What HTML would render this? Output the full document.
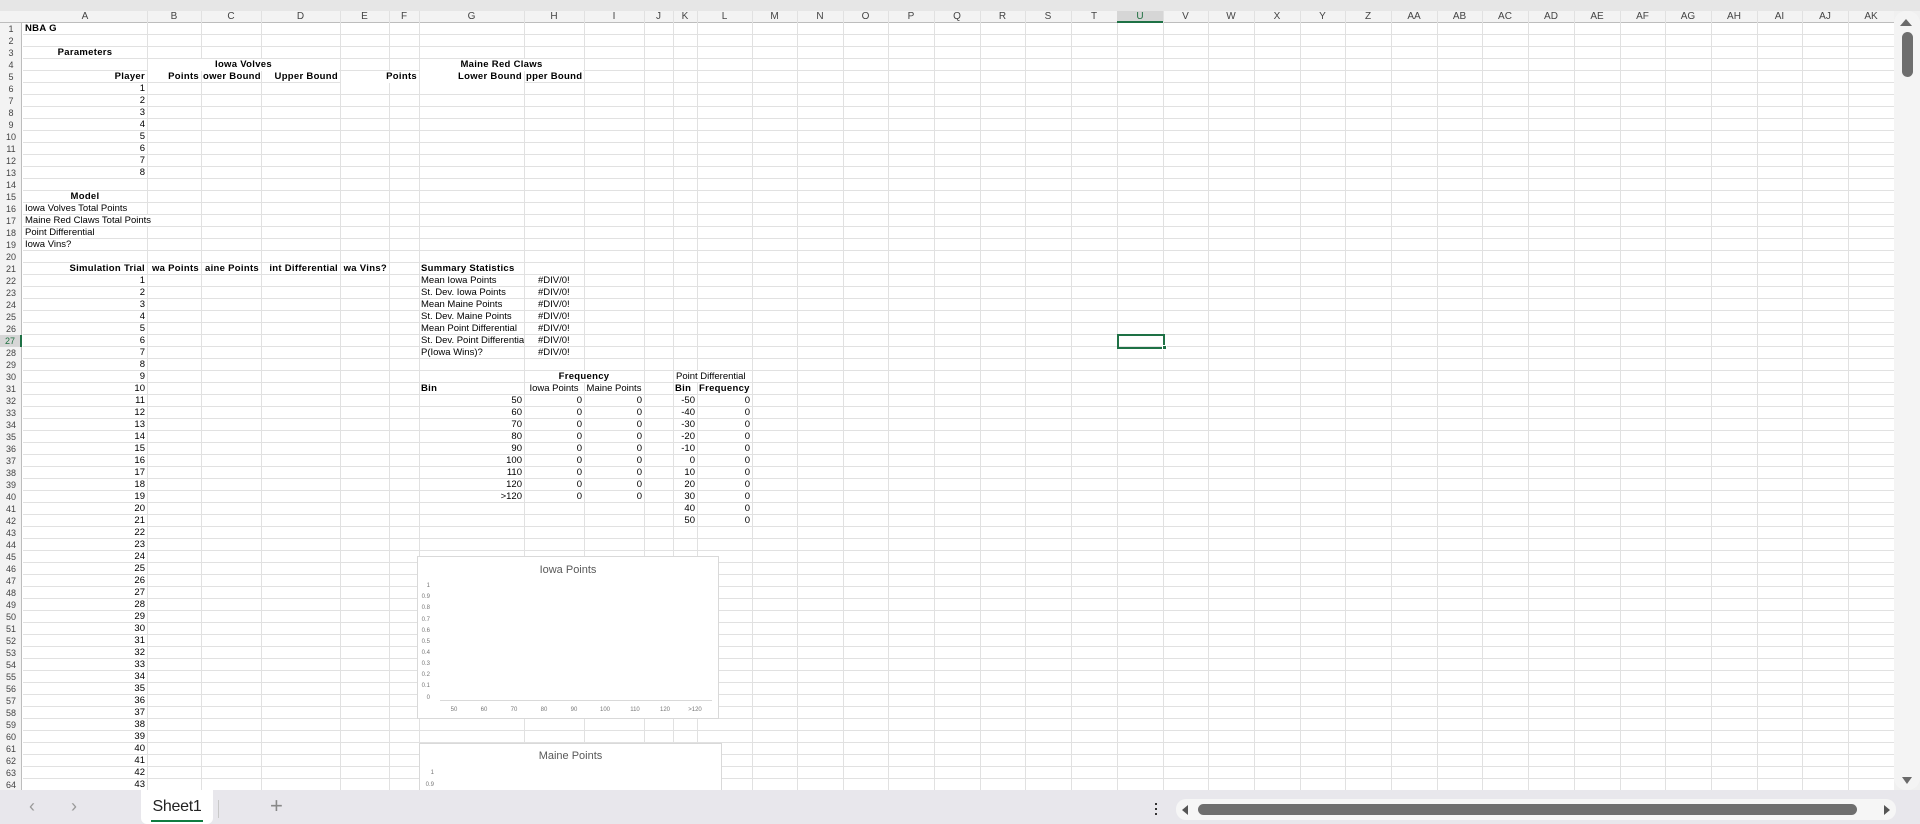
<!DOCTYPE html>
<html><head><meta charset="utf-8"><style>
*{margin:0;padding:0;box-sizing:border-box}
body{width:1920px;height:824px;overflow:hidden;background:#fff;font-family:"Liberation Sans",sans-serif;position:relative}
#top{position:absolute;left:0;top:0;width:1920px;height:11px;background:#e6e6e6}
#colh{position:absolute;left:0;top:11px;width:1894px;height:12px;background:#f3f3f3;border-bottom:1px solid #bdbdbd}
#grid{position:absolute;left:23px;top:23px;width:1871px;height:767px;background:repeating-linear-gradient(to bottom,transparent 0,transparent 11px,#e1e1e1 11px,#e1e1e1 12px)}
#rowh{position:absolute;left:0;top:23px;width:22px;height:767px;background:#f3f3f3;border-right:1px solid #bdbdbd}
.vl{position:absolute;top:11px;height:779px;width:1px;background:#e1e1e1}
.ch{position:absolute;top:11px;height:12px;line-height:12px;font-size:10px;color:#444;text-align:center}
.rh{position:absolute;left:0;width:22px;height:12px;line-height:12px;font-size:9px;color:#444;text-align:center}
.c{position:absolute;height:12px;line-height:12px;font-size:9.5px;white-space:nowrap;overflow:hidden;padding:0 2px;color:#000}
.b{font-weight:bold;letter-spacing:0.3px}.r{text-align:right}.m{text-align:center}
.chart{position:absolute;background:#fff;border:1px solid #d9d9d9}
.ct{position:absolute;width:100%;text-align:center;font-size:11px;color:#595959}
.yl{position:absolute;font-size:6px;color:#777;text-align:right;width:20px}
.xl{position:absolute;font-size:6px;color:#777;text-align:center;width:20px}
#tabs{position:absolute;left:0;top:790px;width:1920px;height:34px;background:#e8e7ec}
#vs{position:absolute;left:1894px;top:11px;width:26px;height:779px;background:#f0f0f0}
</style></head><body>
<div id="top"></div>
<div id="colh"></div>
<div id="grid"></div>
<div id="rowh"></div>
<div class="vl" style="left:147px"></div><div class="vl" style="left:201px"></div><div class="vl" style="left:261px"></div><div class="vl" style="left:340px"></div><div class="vl" style="left:389px"></div><div class="vl" style="left:419px"></div><div class="vl" style="left:524px"></div><div class="vl" style="left:584px"></div><div class="vl" style="left:644px"></div><div class="vl" style="left:673px"></div><div class="vl" style="left:697px"></div><div class="vl" style="left:752px"></div><div class="vl" style="left:797px"></div>
<div class="vl" style="left:843px"></div><div class="vl" style="left:888px"></div><div class="vl" style="left:934px"></div><div class="vl" style="left:980px"></div><div class="vl" style="left:1025px"></div><div class="vl" style="left:1071px"></div><div class="vl" style="left:1117px"></div><div class="vl" style="left:1163px"></div><div class="vl" style="left:1208px"></div><div class="vl" style="left:1254px"></div><div class="vl" style="left:1300px"></div><div class="vl" style="left:1345px"></div><div class="vl" style="left:1391px"></div><div class="vl" style="left:1437px"></div><div class="vl" style="left:1482px"></div><div class="vl" style="left:1528px"></div><div class="vl" style="left:1574px"></div><div class="vl" style="left:1620px"></div><div class="vl" style="left:1665px"></div><div class="vl" style="left:1711px"></div><div class="vl" style="left:1757px"></div><div class="vl" style="left:1802px"></div><div class="vl" style="left:1848px"></div><div class="vl" style="left:1894px"></div>
<div class="ch" style="left:23px;width:124px">A</div><div class="ch" style="left:147px;width:54px">B</div><div class="ch" style="left:201px;width:60px">C</div><div class="ch" style="left:261px;width:79px">D</div><div class="ch" style="left:340px;width:49px">E</div><div class="ch" style="left:389px;width:30px">F</div><div class="ch" style="left:419px;width:105px">G</div><div class="ch" style="left:524px;width:60px">H</div><div class="ch" style="left:584px;width:60px">I</div><div class="ch" style="left:644px;width:29px">J</div><div class="ch" style="left:673px;width:24px">K</div><div class="ch" style="left:697px;width:55px">L</div><div class="ch" style="left:752px;width:45px">M</div>
<div class="ch" style="left:797px;width:46px">N</div><div class="ch" style="left:843px;width:45px">O</div><div class="ch" style="left:888px;width:46px">P</div><div class="ch" style="left:934px;width:46px">Q</div><div class="ch" style="left:980px;width:45px">R</div><div class="ch" style="left:1025px;width:46px">S</div><div class="ch" style="left:1071px;width:46px">T</div><div class="ch" style="left:1117px;width:46px;background:#d6d6d6;color:#1e6e3f;border-bottom:2px solid #1e7145">U</div><div class="ch" style="left:1163px;width:45px">V</div><div class="ch" style="left:1208px;width:46px">W</div><div class="ch" style="left:1254px;width:46px">X</div><div class="ch" style="left:1300px;width:45px">Y</div><div class="ch" style="left:1345px;width:46px">Z</div><div class="ch" style="left:1391px;width:46px">AA</div><div class="ch" style="left:1437px;width:45px">AB</div><div class="ch" style="left:1482px;width:46px">AC</div><div class="ch" style="left:1528px;width:46px">AD</div><div class="ch" style="left:1574px;width:46px">AE</div><div class="ch" style="left:1620px;width:45px">AF</div><div class="ch" style="left:1665px;width:46px">AG</div><div class="ch" style="left:1711px;width:46px">AH</div><div class="ch" style="left:1757px;width:45px">AI</div><div class="ch" style="left:1802px;width:46px">AJ</div><div class="ch" style="left:1848px;width:46px">AK</div>
<div class="rh" style="top:23px">1</div><div class="rh" style="top:35px">2</div><div class="rh" style="top:47px">3</div><div class="rh" style="top:59px">4</div><div class="rh" style="top:71px">5</div><div class="rh" style="top:83px">6</div><div class="rh" style="top:95px">7</div><div class="rh" style="top:107px">8</div><div class="rh" style="top:119px">9</div><div class="rh" style="top:131px">10</div><div class="rh" style="top:143px">11</div><div class="rh" style="top:155px">12</div><div class="rh" style="top:167px">13</div><div class="rh" style="top:179px">14</div><div class="rh" style="top:191px">15</div><div class="rh" style="top:203px">16</div><div class="rh" style="top:215px">17</div><div class="rh" style="top:227px">18</div><div class="rh" style="top:239px">19</div><div class="rh" style="top:251px">20</div><div class="rh" style="top:263px">21</div><div class="rh" style="top:275px">22</div><div class="rh" style="top:287px">23</div><div class="rh" style="top:299px">24</div><div class="rh" style="top:311px">25</div><div class="rh" style="top:323px">26</div><div class="rh" style="top:335px;background:#d6d6d6;color:#1e6e3f;border-right:2px solid #1e7145">27</div><div class="rh" style="top:347px">28</div><div class="rh" style="top:359px">29</div><div class="rh" style="top:371px">30</div><div class="rh" style="top:383px">31</div><div class="rh" style="top:395px">32</div><div class="rh" style="top:407px">33</div><div class="rh" style="top:419px">34</div><div class="rh" style="top:431px">35</div><div class="rh" style="top:443px">36</div><div class="rh" style="top:455px">37</div><div class="rh" style="top:467px">38</div><div class="rh" style="top:479px">39</div><div class="rh" style="top:491px">40</div><div class="rh" style="top:503px">41</div><div class="rh" style="top:515px">42</div><div class="rh" style="top:527px">43</div><div class="rh" style="top:539px">44</div><div class="rh" style="top:551px">45</div><div class="rh" style="top:563px">46</div><div class="rh" style="top:575px">47</div><div class="rh" style="top:587px">48</div><div class="rh" style="top:599px">49</div><div class="rh" style="top:611px">50</div><div class="rh" style="top:623px">51</div><div class="rh" style="top:635px">52</div><div class="rh" style="top:647px">53</div><div class="rh" style="top:659px">54</div><div class="rh" style="top:671px">55</div><div class="rh" style="top:683px">56</div><div class="rh" style="top:695px">57</div><div class="rh" style="top:707px">58</div><div class="rh" style="top:719px">59</div><div class="rh" style="top:731px">60</div><div class="rh" style="top:743px">61</div><div class="rh" style="top:755px">62</div><div class="rh" style="top:767px">63</div><div class="rh" style="top:779px">64</div>

<div class="c b" style="left:23px;top:23px;width:124px">NBA G</div>
<div class="c b m" style="left:23px;top:47px;width:124px">Parameters</div>
<div class="c b m" style="left:148px;top:59px;width:191px;background:#fff">Iowa Volves</div>
<div class="c b m" style="left:420px;top:59px;width:163px;background:#fff">Maine Red Claws</div>
<div class="c b r" style="left:23px;top:71px;width:124px">Player</div>
<div class="c b r" style="left:147px;top:71px;width:54px">Points</div>
<div class="c b r" style="left:201px;top:71px;width:60px">ower Bound</div>
<div class="c b r" style="left:261px;top:71px;width:79px">Upper Bound</div>
<div class="c b r" style="left:341px;top:71px;width:78px;background:#fff">Points</div>
<div class="c b r" style="left:420px;top:71px;width:104px;background:#fff">Lower Bound</div>
<div class="c b r" style="left:524px;top:71px;width:60px">pper Bound</div>
<div class="c r" style="left:23px;top:83px;width:124px">1</div><div class="c r" style="left:23px;top:95px;width:124px">2</div><div class="c r" style="left:23px;top:107px;width:124px">3</div><div class="c r" style="left:23px;top:119px;width:124px">4</div><div class="c r" style="left:23px;top:131px;width:124px">5</div><div class="c r" style="left:23px;top:143px;width:124px">6</div><div class="c r" style="left:23px;top:155px;width:124px">7</div><div class="c r" style="left:23px;top:167px;width:124px">8</div>
<div class="c b m" style="left:23px;top:191px;width:124px">Model</div>
<div class="c" style="left:23px;top:203px;width:150px">Iowa Volves Total Points</div>
<div class="c" style="left:23px;top:215px;width:155px;background:#fff;height:11px">Maine Red Claws Total Points</div>
<div class="c" style="left:23px;top:227px;width:124px">Point Differential</div>
<div class="c" style="left:23px;top:239px;width:124px">Iowa Vins?</div>
<div class="c b r" style="left:23px;top:263px;width:124px">Simulation Trial</div>
<div class="c b r" style="left:147px;top:263px;width:54px">wa Points</div>
<div class="c b r" style="left:201px;top:263px;width:60px">aine Points</div>
<div class="c b r" style="left:261px;top:263px;width:79px">int Differential</div>
<div class="c b r" style="left:340px;top:263px;width:49px">wa Vins?</div>
<div class="c b" style="left:419px;top:263px;width:105px">Summary Statistics</div>
<div class="c" style="left:419px;top:275px;width:105px">Mean Iowa Points</div><div class="c" style="left:536px;top:275px;width:48px">#DIV/0!</div>
<div class="c" style="left:419px;top:287px;width:105px">St. Dev. Iowa Points</div><div class="c" style="left:536px;top:287px;width:48px">#DIV/0!</div>
<div class="c" style="left:419px;top:299px;width:105px">Mean Maine Points</div><div class="c" style="left:536px;top:299px;width:48px">#DIV/0!</div>
<div class="c" style="left:419px;top:311px;width:105px">St. Dev. Maine Points</div><div class="c" style="left:536px;top:311px;width:48px">#DIV/0!</div>
<div class="c" style="left:419px;top:323px;width:105px">Mean Point Differential</div><div class="c" style="left:536px;top:323px;width:48px">#DIV/0!</div>
<div class="c" style="left:419px;top:335px;width:105px">St. Dev. Point Differentia</div><div class="c" style="left:536px;top:335px;width:48px">#DIV/0!</div>
<div class="c" style="left:419px;top:347px;width:105px">P(Iowa Wins)?</div><div class="c" style="left:536px;top:347px;width:48px">#DIV/0!</div>
<div class="c b m" style="left:525px;top:371px;width:118px;background:#fff;height:11px">Frequency</div>
<div class="c" style="left:674px;top:371px;width:78px;background:#fff;height:11px">Point Differential</div>
<div class="c b" style="left:419px;top:383px;width:105px">Bin</div>
<div class="c m" style="left:524px;top:383px;width:60px">Iowa Points</div>
<div class="c m" style="left:584px;top:383px;width:60px">Maine Points</div>
<div class="c b" style="left:673px;top:383px;width:24px">Bin</div>
<div class="c b" style="left:697px;top:383px;width:55px">Frequency</div>
<div class="c r" style="left:23px;top:275px;width:124px">1</div><div class="c r" style="left:23px;top:287px;width:124px">2</div><div class="c r" style="left:23px;top:299px;width:124px">3</div><div class="c r" style="left:23px;top:311px;width:124px">4</div><div class="c r" style="left:23px;top:323px;width:124px">5</div><div class="c r" style="left:23px;top:335px;width:124px">6</div><div class="c r" style="left:23px;top:347px;width:124px">7</div><div class="c r" style="left:23px;top:359px;width:124px">8</div><div class="c r" style="left:23px;top:371px;width:124px">9</div><div class="c r" style="left:23px;top:383px;width:124px">10</div><div class="c r" style="left:23px;top:395px;width:124px">11</div><div class="c r" style="left:23px;top:407px;width:124px">12</div><div class="c r" style="left:23px;top:419px;width:124px">13</div><div class="c r" style="left:23px;top:431px;width:124px">14</div><div class="c r" style="left:23px;top:443px;width:124px">15</div><div class="c r" style="left:23px;top:455px;width:124px">16</div><div class="c r" style="left:23px;top:467px;width:124px">17</div><div class="c r" style="left:23px;top:479px;width:124px">18</div><div class="c r" style="left:23px;top:491px;width:124px">19</div><div class="c r" style="left:23px;top:503px;width:124px">20</div><div class="c r" style="left:23px;top:515px;width:124px">21</div><div class="c r" style="left:23px;top:527px;width:124px">22</div><div class="c r" style="left:23px;top:539px;width:124px">23</div><div class="c r" style="left:23px;top:551px;width:124px">24</div><div class="c r" style="left:23px;top:563px;width:124px">25</div><div class="c r" style="left:23px;top:575px;width:124px">26</div><div class="c r" style="left:23px;top:587px;width:124px">27</div><div class="c r" style="left:23px;top:599px;width:124px">28</div><div class="c r" style="left:23px;top:611px;width:124px">29</div><div class="c r" style="left:23px;top:623px;width:124px">30</div><div class="c r" style="left:23px;top:635px;width:124px">31</div><div class="c r" style="left:23px;top:647px;width:124px">32</div><div class="c r" style="left:23px;top:659px;width:124px">33</div><div class="c r" style="left:23px;top:671px;width:124px">34</div><div class="c r" style="left:23px;top:683px;width:124px">35</div><div class="c r" style="left:23px;top:695px;width:124px">36</div><div class="c r" style="left:23px;top:707px;width:124px">37</div><div class="c r" style="left:23px;top:719px;width:124px">38</div><div class="c r" style="left:23px;top:731px;width:124px">39</div><div class="c r" style="left:23px;top:743px;width:124px">40</div><div class="c r" style="left:23px;top:755px;width:124px">41</div><div class="c r" style="left:23px;top:767px;width:124px">42</div><div class="c r" style="left:23px;top:779px;width:124px">43</div>
<div class="c r" style="left:419px;top:395px;width:105px">50</div><div class="c r" style="left:524px;top:395px;width:60px">0</div><div class="c r" style="left:584px;top:395px;width:60px">0</div>
<div class="c r" style="left:419px;top:407px;width:105px">60</div><div class="c r" style="left:524px;top:407px;width:60px">0</div><div class="c r" style="left:584px;top:407px;width:60px">0</div>
<div class="c r" style="left:419px;top:419px;width:105px">70</div><div class="c r" style="left:524px;top:419px;width:60px">0</div><div class="c r" style="left:584px;top:419px;width:60px">0</div>
<div class="c r" style="left:419px;top:431px;width:105px">80</div><div class="c r" style="left:524px;top:431px;width:60px">0</div><div class="c r" style="left:584px;top:431px;width:60px">0</div>
<div class="c r" style="left:419px;top:443px;width:105px">90</div><div class="c r" style="left:524px;top:443px;width:60px">0</div><div class="c r" style="left:584px;top:443px;width:60px">0</div>
<div class="c r" style="left:419px;top:455px;width:105px">100</div><div class="c r" style="left:524px;top:455px;width:60px">0</div><div class="c r" style="left:584px;top:455px;width:60px">0</div>
<div class="c r" style="left:419px;top:467px;width:105px">110</div><div class="c r" style="left:524px;top:467px;width:60px">0</div><div class="c r" style="left:584px;top:467px;width:60px">0</div>
<div class="c r" style="left:419px;top:479px;width:105px">120</div><div class="c r" style="left:524px;top:479px;width:60px">0</div><div class="c r" style="left:584px;top:479px;width:60px">0</div>
<div class="c r" style="left:419px;top:491px;width:105px">&gt;120</div><div class="c r" style="left:524px;top:491px;width:60px">0</div><div class="c r" style="left:584px;top:491px;width:60px">0</div>
<div class="c r" style="left:673px;top:395px;width:24px">-50</div><div class="c r" style="left:697px;top:395px;width:55px">0</div>
<div class="c r" style="left:673px;top:407px;width:24px">-40</div><div class="c r" style="left:697px;top:407px;width:55px">0</div>
<div class="c r" style="left:673px;top:419px;width:24px">-30</div><div class="c r" style="left:697px;top:419px;width:55px">0</div>
<div class="c r" style="left:673px;top:431px;width:24px">-20</div><div class="c r" style="left:697px;top:431px;width:55px">0</div>
<div class="c r" style="left:673px;top:443px;width:24px">-10</div><div class="c r" style="left:697px;top:443px;width:55px">0</div>
<div class="c r" style="left:673px;top:455px;width:24px">0</div><div class="c r" style="left:697px;top:455px;width:55px">0</div>
<div class="c r" style="left:673px;top:467px;width:24px">10</div><div class="c r" style="left:697px;top:467px;width:55px">0</div>
<div class="c r" style="left:673px;top:479px;width:24px">20</div><div class="c r" style="left:697px;top:479px;width:55px">0</div>
<div class="c r" style="left:673px;top:491px;width:24px">30</div><div class="c r" style="left:697px;top:491px;width:55px">0</div>
<div class="c r" style="left:673px;top:503px;width:24px">40</div><div class="c r" style="left:697px;top:503px;width:55px">0</div>
<div class="c r" style="left:673px;top:515px;width:24px">50</div><div class="c r" style="left:697px;top:515px;width:55px">0</div>

<div style="position:absolute;left:1117px;top:334px;width:48px;height:15px;border:2px solid #1e7145"></div>
<div style="position:absolute;left:1162px;top:345px;width:5px;height:5px;background:#1e7145;border:1px solid #fff"></div>

<div class="chart" style="left:417px;top:556px;width:302px;height:163px">
<div class="ct" style="top:7px">Iowa Points</div>
<div class="yl" style="left:-8px;top:26px">1</div><div class="yl" style="left:-8px;top:37px">0.9</div><div class="yl" style="left:-8px;top:48px">0.8</div><div class="yl" style="left:-8px;top:60px">0.7</div><div class="yl" style="left:-8px;top:71px">0.6</div><div class="yl" style="left:-8px;top:82px">0.5</div><div class="yl" style="left:-8px;top:93px">0.4</div><div class="yl" style="left:-8px;top:104px">0.3</div><div class="yl" style="left:-8px;top:115px">0.2</div><div class="yl" style="left:-8px;top:126px">0.1</div><div class="yl" style="left:-8px;top:138px">0</div>
<div style="position:absolute;left:22px;top:143px;width:272px;height:1px;background:#d9d9d9"></div>
<div class="xl" style="left:26px;top:150px">50</div><div class="xl" style="left:56px;top:150px">60</div><div class="xl" style="left:86px;top:150px">70</div><div class="xl" style="left:116px;top:150px">80</div><div class="xl" style="left:146px;top:150px">90</div><div class="xl" style="left:177px;top:150px">100</div><div class="xl" style="left:207px;top:150px">110</div><div class="xl" style="left:237px;top:150px">120</div><div class="xl" style="left:267px;top:150px">&gt;120</div>
</div>
<div class="chart" style="left:419px;top:743px;width:303px;height:60px">
<div class="ct" style="top:6px">Maine Points</div>
<div class="yl" style="left:-6px;top:26px">1</div><div class="yl" style="left:-6px;top:38px">0.9</div>
</div>

<div id="vs">
<div style="position:absolute;left:0;top:0;width:26px;height:779px;background:#f4f4f4;border-radius:12px"></div>
<div style="position:absolute;left:6px;top:8px;width:0;height:0;border-left:6px solid transparent;border-right:6px solid transparent;border-bottom:7px solid #6a6a6a"></div>
<div style="position:absolute;left:8px;top:21px;width:11px;height:45px;background:#6e6e6e;border-radius:6px"></div>
<div style="position:absolute;left:8px;top:766px;width:0;height:0;border-left:5px solid transparent;border-right:5px solid transparent;border-top:7px solid #6a6a6a"></div>
</div>

<div id="tabs">
<div style="position:absolute;left:29px;top:6px;font-size:18px;color:#999">&#x2039;</div>
<div style="position:absolute;left:71px;top:6px;font-size:18px;color:#999">&#x203A;</div>
<div style="position:absolute;left:141px;top:0;width:72px;height:34px;background:#fff;border-radius:0 0 6px 6px"></div>
<div style="position:absolute;left:141px;top:8px;width:72px;text-align:center;font-size:16px;color:#222;letter-spacing:-0.3px">Sheet1</div>
<div style="position:absolute;left:151px;top:30px;width:52px;height:2px;background:#107c41"></div>
<div style="position:absolute;left:218px;top:10px;width:1px;height:18px;background:#c8c8c8"></div>
<div style="position:absolute;left:270px;top:3px;font-size:22px;color:#888">+</div>
<div style="position:absolute;left:1155px;top:13px;width:2px;height:2px;background:#333;box-shadow:0 5px 0 #333,0 10px 0 #333"></div>
<div style="position:absolute;left:1176px;top:9px;width:720px;height:21px;background:#f6f6f6;border-radius:10px"></div>
<div style="position:absolute;left:1182px;top:15px;width:0;height:0;border-top:5px solid transparent;border-bottom:5px solid transparent;border-right:6px solid #555"></div>
<div style="position:absolute;left:1198px;top:14px;width:659px;height:11px;background:#6e6e6e;border-radius:6px"></div>
<div style="position:absolute;left:1884px;top:15px;width:0;height:0;border-top:5px solid transparent;border-bottom:5px solid transparent;border-left:6px solid #555"></div>
</div>
</body></html>
